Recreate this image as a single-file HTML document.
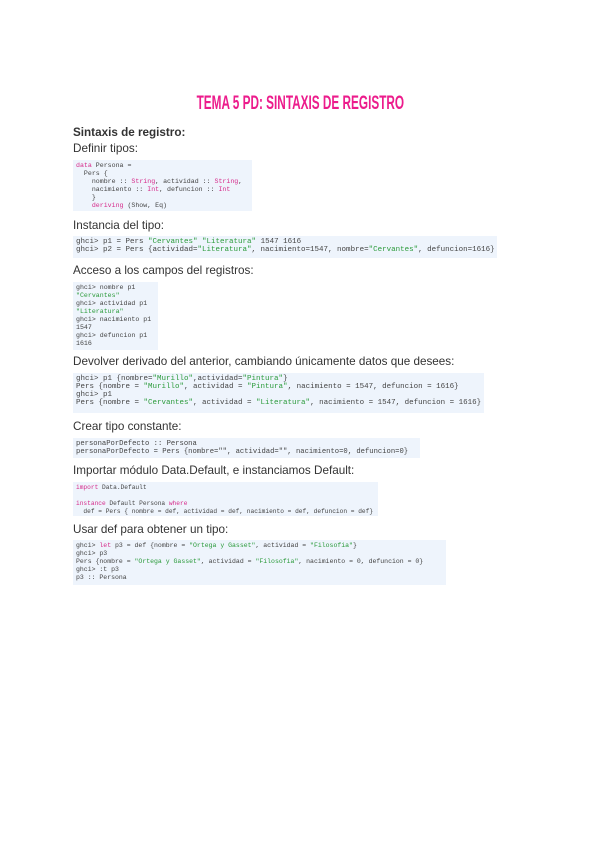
<!DOCTYPE html>
<html><head><meta charset="utf-8"><style>
body{margin:0;width:600px;height:848px;background:#fff;position:relative;font-family:"Liberation Sans",sans-serif;color:#333;}
.t{position:absolute;left:73px;font-size:11.7px;line-height:14px;white-space:nowrap;}
.title{position:absolute;left:0;width:600px;top:94px;text-align:center;color:#ec1c8c;font-size:19px;line-height:20px;font-weight:bold;}
.title span{display:inline-block;transform:scaleX(0.62);}
.c{position:absolute;left:73px;background:#eef4fc;font-family:"Liberation Mono",monospace;font-size:7.5px;line-height:8px;color:#444;white-space:pre;padding:2px 3px;box-sizing:border-box;overflow:hidden;}
.k{color:#d62a8a}.s{color:#2a9a3a}
</style></head><body>
<div class="title"><span>TEMA 5 PD: SINTAXIS DE REGISTRO</span></div>
<div class="t" style="top:126px;font-weight:bold;">Sintaxis de registro:</div>
<div class="t" style="top:142px;">Definir tipos:</div>
<div class="c" style="top:160px;width:179px;height:51px;font-size:6.6px;"><span class="k">data</span> Persona =
  Pers {
    nombre :: <span class="k">String</span>, actividad :: <span class="k">String</span>,
    nacimiento :: <span class="k">Int</span>, defuncion :: <span class="k">Int</span>
    }
    <span class="k">deriving</span> (Show, Eq)</div>
<div class="t" style="top:219px;">Instancia del tipo:</div>
<div class="c" style="top:236px;width:424px;height:22px;">ghci> p1 = Pers <span class="s">"Cervantes"</span> <span class="s">"Literatura"</span> 1547 1616
ghci> p2 = Pers {actividad=<span class="s">"Literatura"</span>, nacimiento=1547, nombre=<span class="s">"Cervantes"</span>, defuncion=1616}</div>
<div class="t" style="top:264px;">Acceso a los campos del registros:</div>
<div class="c" style="top:282px;width:85px;height:68px;font-size:6.6px;">ghci> nombre p1
<span class="s">"Cervantes"</span>
ghci> actividad p1
<span class="s">"Literatura"</span>
ghci> nacimiento p1
1547
ghci> defuncion p1
1616</div>
<div class="t" style="top:355px;">Devolver derivado del anterior, cambiando únicamente datos que desees:</div>
<div class="c" style="top:373px;width:411px;height:40px;">ghci> p1 {nombre=<span class="s">"Murillo"</span>,actividad=<span class="s">"Pintura"</span>}
Pers {nombre = <span class="s">"Murillo"</span>, actividad = <span class="s">"Pintura"</span>, nacimiento = 1547, defuncion = 1616}
ghci> p1
Pers {nombre = <span class="s">"Cervantes"</span>, actividad = <span class="s">"Literatura"</span>, nacimiento = 1547, defuncion = 1616}</div>
<div class="t" style="top:420px;">Crear tipo constante:</div>
<div class="c" style="top:438px;width:347px;height:20px;font-size:7.2px;">personaPorDefecto :: Persona
personaPorDefecto = Pers {nombre="", actividad="", nacimiento=0, defuncion=0}</div>
<div class="t" style="top:464px;">Importar módulo Data.Default, e instanciamos Default:</div>
<div class="c" style="top:482px;width:305px;height:34px;font-size:6.2px;"><span class="k">import</span> Data.Default

<span class="k">instance</span> Default Persona <span class="k">where</span>
  def = Pers { nombre = def, actividad = def, nacimiento = def, defuncion = def}</div>
<div class="t" style="top:523px;">Usar def para obtener un tipo:</div>
<div class="c" style="top:540px;width:373px;height:45px;font-size:6.5px;">ghci> <span class="k">let</span> p3 = def {nombre = <span class="s">"Ortega y Gasset"</span>, actividad = <span class="s">"Filosofia"</span>}
ghci> p3
Pers {nombre = <span class="s">"Ortega y Gasset"</span>, actividad = <span class="s">"Filosofia"</span>, nacimiento = 0, defuncion = 0}
ghci> :t p3
p3 :: Persona</div>
</body></html>
